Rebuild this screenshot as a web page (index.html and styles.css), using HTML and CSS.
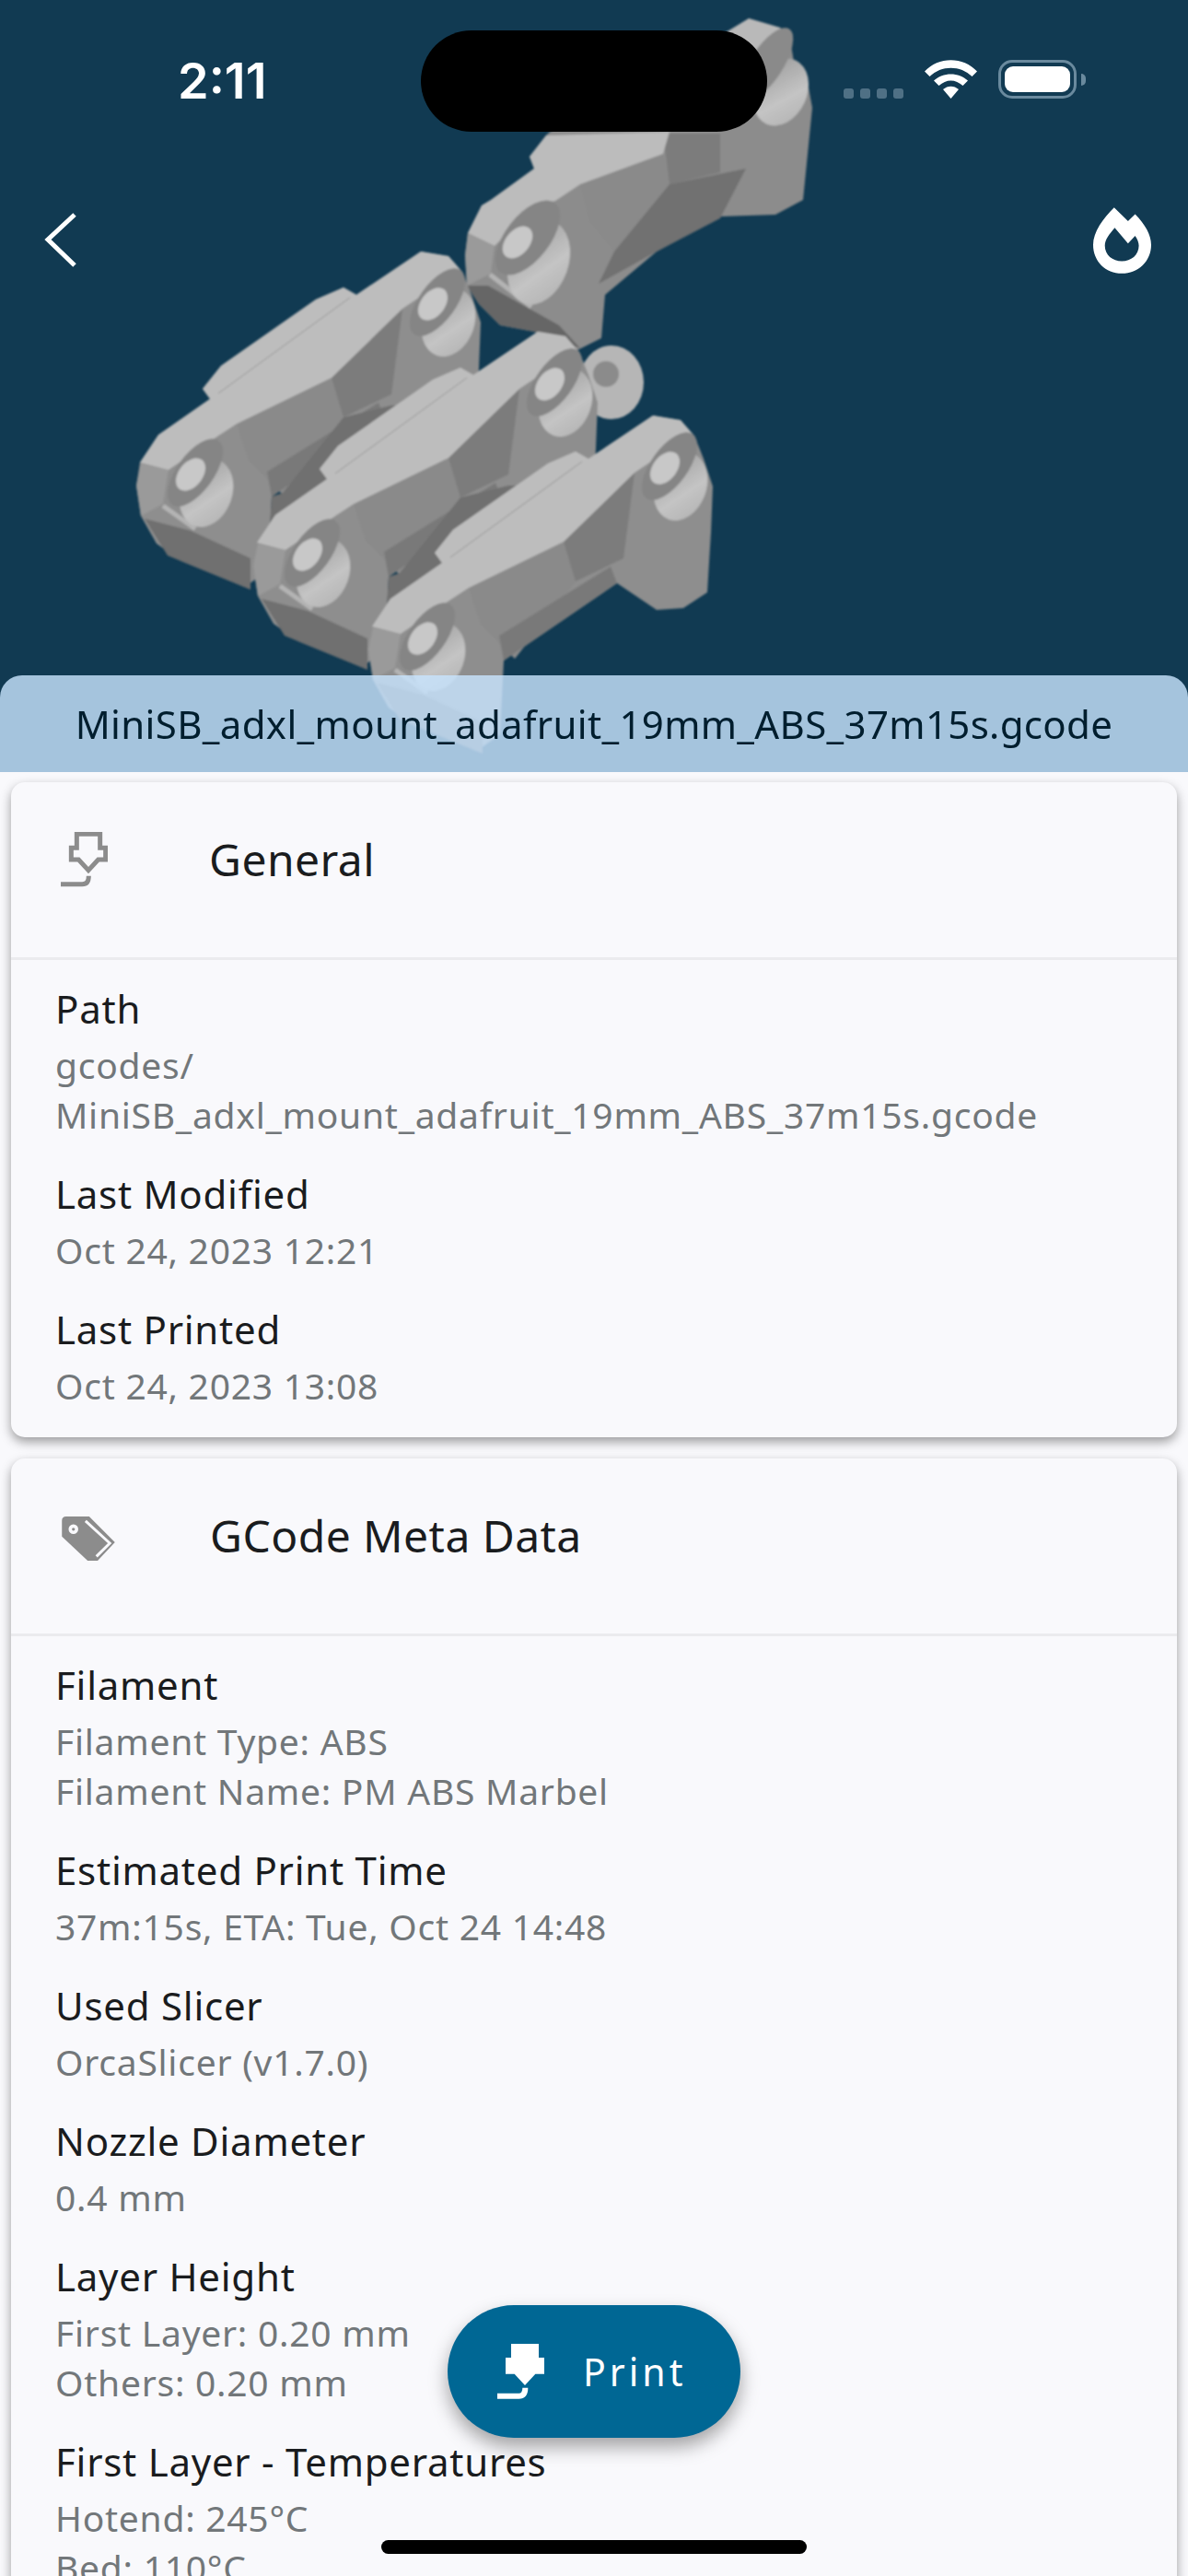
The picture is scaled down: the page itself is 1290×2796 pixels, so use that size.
FILE: index.html
```html
<!doctype html>
<html lang="en">

<head>
    <meta charset="UTF-8">
    <meta name="viewport" content="width=device-width, initial-scale=1.0">
    <title>GCode Details</title>
    <link rel="stylesheet" href="styles.css">
</head>

<body>
    <div class="screen">
        <header class="hero">
            <svg class="model" viewBox="0 0 1290 860" aria-hidden="true">
                <defs>
                    <filter id="soft" x="-5%" y="-5%" width="110%" height="110%">
                        <feGaussianBlur stdDeviation="1.3"></feGaussianBlur>
                    </filter>
                    <linearGradient id="pale" x1="0" y1="0" x2="1" y2="1">
                        <stop offset="0" stop-color="#969696"></stop>
                        <stop offset="0.6" stop-color="#c4c4c4"></stop>
                        <stop offset="1" stop-color="#b0b0b0"></stop>
                    </linearGradient>
                    <g id="eye">
                        <ellipse fill="url(#pale)" cx="17" cy="20" rx="28" ry="38" transform="rotate(20 17 20)"></ellipse>
                        <ellipse fill="#858585" cx="5" cy="-2" rx="20" ry="43" transform="rotate(36 5 -2)"></ellipse>
                        <ellipse fill="#c8c8c8" cx="0" cy="0" rx="13" ry="20" transform="rotate(38)"></ellipse>
                    </g>
                    <g id="link">
                        <path fill="#8e8e8e" d="M457 273L487 278L502 295L512 320L522 350L520 400L516 465L490 482L461 484L418 455L295 539L291 619L266 637L197 609L170 590L153 560L148 527L152 502L172 472L228 433L220 422L240 397L343 325L373 312L387 320Z"></path>
                        <path fill="#8a8a8a" d="M257 460L360 410L373 453L307 537L270 500Z"></path>
                        <path fill="#7c7c7c" d="M360 410L437 335L425 428L373 453Z"></path>
                        <path fill="#797979" d="M290 512L411 437L418 455L295 539Z"></path>
                        <path fill="#6f6f6f" d="M157 563L182 603L272 640L272 606L207 576Z"></path>
                        <path fill="#9a9a9a" d="M153 503L183 510L177 547L153 560L148 527Z"></path>
                        <path fill="#bdbdbd" d="M152 502L172 472L228 433L220 422L240 397L343 325L373 312L387 320L457 273L487 278L500 293L437 335L360 410L257 460L237 473L183 510Z"></path>
                        <path fill="none" stroke="#a6a6a6" stroke-width="1.500" d="M237 427L380 323"></path>
                        <path fill="none" stroke="#b4b4b4" stroke-width="5" d="M177 549L212 574"></path>
                        <use href="#eye" x="470" y="330"></use>
                        <use href="#eye" x="207" y="515"></use>
                    </g>
                    <!-- only shows in the slot between two links, the front one has none -->
                    <g id="link-back">
                        <path fill="#707070" d="M373 453L425 440L440 440L360 540L291 600L295 539L307 535Z"></path>
                    </g>
                </defs>
                <g filter="url(#soft)">
                    <path fill="#8c8c8c" d="M813 20L847 30L858 43L862 67L877 90L882 117L872 217L842 233L782 235L713 273L657 320L653 367L627 380L580 360L543 353L520 330L507 310L505 277L508 253L523 223L533 217L580 183L575 170L593 147L597 143L780 60Z"></path>
                    <path fill="#8a8a8a" d="M630 200L720 167L727 200L667 273L640 240Z"></path>
                    <path fill="#7c7c7c" d="M720 145L782 145L782 187L727 200Z"></path>
                    <path fill="#717171" d="M727 200L810 183L782 237L713 273L650 308L667 273Z"></path>
                    <path fill="#bcbcbc" d="M508 253L523 223L533 217L580 183L575 170L593 147L727 143L720 167L630 200L603 218L583 223L547 257L537 267Z"></path>
                    <path fill="#9a9a9a" d="M508 253L537 267L533 297L507 310L505 277Z"></path>
                    <path fill="#666666" d="M507 310L530 310L607 353L630 378L580 360L543 353L520 330Z"></path>
                    <path fill="#b9b9b9" d="M780 40L813 20L847 30L858 43L835 65L790 70Z"></path>
                    <ellipse fill="url(#pale)" cx="848" cy="100" rx="28" ry="38" transform="rotate(25 848 100)"></ellipse>
                    <ellipse fill="#8a8a8a" cx="832" cy="70" rx="18" ry="46" transform="rotate(33 832 70)"></ellipse>
                    <path fill="none" stroke="#b4b4b4" stroke-width="5" d="M532 298L577 333"></path>
                    <ellipse fill="url(#pale)" cx="585" cy="285" rx="32" ry="47" transform="rotate(20 585 285)"></ellipse>
                    <ellipse fill="#858585" cx="573" cy="258" rx="24" ry="48" transform="rotate(38 573 258)"></ellipse>
                    <ellipse fill="#c8c8c8" cx="562" cy="263" rx="13" ry="20" transform="rotate(40 562 263)"></ellipse>
                    <use href="#link"></use>
                    <use href="#link-back"></use>
                    <ellipse fill="#b6b6b6" cx="664" cy="415" rx="35" ry="40"></ellipse>
                    <circle fill="#8b8b8b" cx="658" cy="406" r="14"></circle>
                    <use href="#link" transform="translate(127 87)"></use>
                    <use href="#link-back" transform="translate(127 87)"></use>
                    <use href="#link" transform="translate(252 178)"></use>
                </g>
            </svg>

            <div class="status-bar">
                <span class="clock">2:11</span>
                <div class="status-icons">
                    <div class="signal"><i></i><i></i><i></i><i></i></div>
                    <svg class="wifi" viewBox="0 0 57 42" aria-hidden="true">
                        <path d="M0 12.5C15 -4 42 -4 57 12.5L51.5 18C39 5.5 18 5.5 5.500 18Z"></path>
                        <path d="M10 22.500C20 13 37 13 47 22.500L41.500 28C33.500 20.500 23.500 20.500 15.500 28Z"></path>
                        <path d="M20 32C25 27.500 32 27.500 37 32L28.500 42Z"></path>
                    </svg>
                    <div class="battery"><div class="battery-level"></div></div>
                </div>
            </div>
            <div class="island"></div>

            <div class="hero-nav">
                <svg class="back" viewBox="0 0 36 60" aria-hidden="true">
                    <path d="M33 2L4 29L33 57"></path>
                </svg>
                <svg class="flame" viewBox="982 676 188 214" aria-hidden="true">
                    <path fill-rule="evenodd" d="M1050 676L1095 720L1118 698C1150 730 1170 765 1170 797C1170 850 1128 890 1075 890C1022 890 982 850 982 797C982 755 1015 710 1050 676ZM1052 742C1035 762 1020 780 1020 800C1020 830 1045 850 1075 850C1105 850 1130 830 1130 800C1130 790 1125 778 1118 768L1095 793Z"></path>
                </svg>
            </div>

            <div class="file-bar">MiniSB_adxl_mount_adafruit_19mm_ABS_37m15s.gcode</div>
        </header>

        <main class="cards">
            <section class="card">
                <div class="card-head">
                    <svg class="head-icon" viewBox="198 190 153 180" aria-hidden="true">
                        <path class="nozzle-line" d="M250 197H326V242H344V280H320L288 315L256 280H232V242H250Z"></path>
                        <path class="nozzle-line" d="M198 360H268Q289 360 289 333"></path>
                    </svg>
                    <h2>General</h2>
                </div>
                <div class="card-body">
                    <div class="row">
                        <div class="row-title">Path</div>
                        <div class="row-sub">gcodes/<br>MiniSB_adxl_mount_adafruit_19mm_ABS_37m15s.gcode</div>
                    </div>
                    <div class="row">
                        <div class="row-title">Last Modified</div>
                        <div class="row-sub">Oct 24, 2023 12:21</div>
                    </div>
                    <div class="row">
                        <div class="row-title">Last Printed</div>
                        <div class="row-sub">Oct 24, 2023 13:08</div>
                    </div>
                </div>
            </section>

            <section class="card">
                <div class="card-head">
                    <svg class="head-icon tag" viewBox="200 320 175 146" aria-hidden="true">
                        <path class="tag-body" fill-rule="evenodd" d="M214 320H290L375 405L318 466H285L200 386V334Q200 320 214 320ZM238 346A16 16 0 1 0 238 378A16 16 0 1 0 238 346Z"></path>
                        <circle class="tag-body" cx="238" cy="362" r="5"></circle>
                        <path class="tag-gap" d="M278 335L358 408L314 452"></path>
                    </svg>
                    <h2>GCode Meta Data</h2>
                </div>
                <div class="card-body">
                    <div class="row">
                        <div class="row-title">Filament</div>
                        <div class="row-sub">Filament Type: ABS<br>Filament Name: PM ABS Marbel</div>
                    </div>
                    <div class="row">
                        <div class="row-title">Estimated Print Time</div>
                        <div class="row-sub">37m:15s, ETA: Tue, Oct 24 14:48</div>
                    </div>
                    <div class="row">
                        <div class="row-title">Used Slicer</div>
                        <div class="row-sub">OrcaSlicer (v1.7.0)</div>
                    </div>
                    <div class="row">
                        <div class="row-title">Nozzle Diameter</div>
                        <div class="row-sub">0.4 mm</div>
                    </div>
                    <div class="row">
                        <div class="row-title">Layer Height</div>
                        <div class="row-sub">First Layer: 0.20 mm<br>Others: 0.20 mm</div>
                    </div>
                    <div class="row">
                        <div class="row-title">First Layer - Temperatures</div>
                        <div class="row-sub">Hotend: 245°C<br>Bed: 110°C</div>
                    </div>
                </div>
            </section>
        </main>

        <button class="print-btn">
            <svg class="print-icon" viewBox="198 190 153 180" aria-hidden="true">
                <path d="M243 190H333V235H351V288H322L288 325L254 288H225V235H243Z"></path>
                <path class="print-tail" d="M198 360H268Q289 360 289 333"></path>
            </svg>
            <span>Print</span>
        </button>
        <div class="home-bar"></div>
    </div>
</body>

</html>
```

FILE: styles.css
```css
* {
    margin: 0;
    padding: 0;
    box-sizing: border-box;
}

body {
    background-color: #f9f9fc;
    color: #1a1c1e;
    font-family: 'Noto Sans', 'Open Sans', sans-serif;
}

.screen {
    position: relative;
    width: 1290px;
    height: 2796px;
    overflow: hidden;
    background-color: #f9f9fc;
}

/* top part with the 3d preview */
.hero {
    position: relative;
    height: 838px;
    display: flex;
    flex-direction: column;
    overflow: hidden;
    background-color: #113a52;
}

.model {
    position: absolute;
    top: 0;
    left: 0;
    width: 1290px;
    height: 860px;
}

.status-bar {
    position: relative;
    display: flex;
    justify-content: space-between;
    padding: 58px 121px 0 193px;
    height: 122px;
}

.clock {
    color: #fff;
    font-family: Inter, 'Liberation Sans', sans-serif;
    font-size: 54px;
    font-weight: 600;
    line-height: 60px;
}

.status-icons {
    display: flex;
    align-items: flex-start;
    padding-top: 7px;
}

.signal {
    display: flex;
    gap: 7px;
    margin-top: 31px;
    margin-right: 23px;
}

.signal i {
    width: 11px;
    height: 11px;
    border-radius: 3px;
    background-color: #4f7085;
}

.wifi {
    width: 57px;
    height: 42px;
    margin-right: 23px;
    fill: #fff;
}

.battery {
    position: relative;
    width: 85px;
    height: 42px;
    padding: 4px;
    border: 3px solid #6a8a9e;
    border-radius: 15px;
}

.battery::after {
    content: "";
    position: absolute;
    top: 12px;
    right: -13px;
    width: 5px;
    height: 13px;
    border-radius: 0 6px 6px 0;
    background-color: #6a8a9e;
}

.battery-level {
    height: 100%;
    border-radius: 9px;
    background-color: #fff;
}

.island {
    position: absolute;
    top: 33px;
    left: 457px;
    width: 376px;
    height: 110px;
    border-radius: 55px;
    background-color: #000;
}

.hero-nav {
    position: relative;
    display: flex;
    justify-content: space-between;
    align-items: center;
    padding: 0 40px 0 48px;
    margin-top: 103px;
}

.back {
    width: 36px;
    height: 60px;
    fill: none;
    stroke: #fff;
    stroke-width: 5;
}

.flame {
    width: 63px;
    height: 72px;
    fill: #fff;
}

.file-bar {
    position: absolute;
    left: 0;
    right: 0;
    bottom: 0;
    height: 105px;
    border-radius: 24px 24px 0 0;
    background-color: rgba(200, 228, 254, 0.81);
    color: #001e2e;
    font-size: 42px;
    letter-spacing: 0.34px;
    line-height: 105px;
    text-align: center;
    white-space: nowrap;
}

/* cards */
.cards {
    display: flex;
    flex-direction: column;
    gap: 23px;
    padding: 11px 12px 0;
}

.card {
    border-radius: 15px;
    background-color: #f9f9fc;
    box-shadow: 0 5px 12px rgba(0, 0, 0, 0.38);
}

.card-head {
    display: flex;
    align-items: center;
    height: 193px;
    padding-bottom: 22px;
    border-bottom: 3px solid #ebebee;
}

.head-icon {
    width: 51px;
    height: 60px;
    margin-left: 54px;
    margin-right: 110px;
    flex-shrink: 0;
}

.head-icon.tag {
    width: 58px;
    height: 48px;
    margin-top: 6px;
    margin-left: 55px;
    margin-right: 103px;
}

.nozzle-line {
    fill: none;
    stroke: #8c8c8c;
    stroke-width: 15;
}

.tag-body {
    fill: #8c8c8c;
}

.tag-gap {
    fill: none;
    stroke: #f9f9fc;
    stroke-width: 9;
}

.card-head h2 {
    font-size: 48px;
    font-weight: 400;
    letter-spacing: 0.45px;
    line-height: 60px;
}

.card-body {
    padding: 7px 0 16px;
}

.row {
    padding: 16px 48px 13px;
}

.row-title {
    margin-bottom: 4px;
    font-size: 42px;
    line-height: 60px;
    letter-spacing: 0.75px;
}

.row-sub {
    color: #72777a;
    font-size: 39px;
    line-height: 54px;
    letter-spacing: 0.75px;
}

/* floating stuff */
.print-btn {
    position: absolute;
    left: 486px;
    top: 2502px;
    width: 318px;
    height: 144px;
    display: flex;
    align-items: center;
    padding-left: 54px;
    gap: 42px;
    border: none;
    border-radius: 72px;
    background-color: #006794;
    color: #fff;
    font-family: inherit;
    font-size: 41px;
    letter-spacing: 4px;
    box-shadow: 0 10px 20px rgba(0, 0, 0, 0.35);
}

.print-icon {
    width: 51px;
    height: 60px;
    fill: #fff;
}

.print-tail {
    fill: none;
    stroke: #fff;
    stroke-width: 18;
}

.home-bar {
    position: absolute;
    left: 414px;
    top: 2757px;
    width: 462px;
    height: 15px;
    border-radius: 8px;
    background-color: #000;
}
```
